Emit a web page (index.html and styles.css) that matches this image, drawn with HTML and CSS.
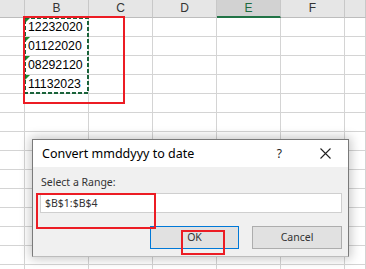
FILE: index.html
```html
<!DOCTYPE html>
<html>
<head>
<meta charset="utf-8">
<link rel="stylesheet" href="styles.css">
</head>
<body>
<div class="page">
  <div class="sheet">
    <div class="hc"></div><div class="hc">B</div><div class="hc">C</div><div class="hc">D</div><div class="hc sel">E</div><div class="hc">F</div><div class="hc"></div>

    <div class="c"></div><div class="c val"><span class="tri"></span>12232020</div><div class="c"></div><div class="c"></div><div class="c"></div><div class="c"></div><div class="c"></div>
    <div class="c"></div><div class="c val"><span class="tri"></span>01122020</div><div class="c"></div><div class="c"></div><div class="c"></div><div class="c"></div><div class="c"></div>
    <div class="c"></div><div class="c val"><span class="tri"></span>08292120</div><div class="c"></div><div class="c"></div><div class="c"></div><div class="c"></div><div class="c"></div>
    <div class="c"></div><div class="c val"><span class="tri"></span>11132023</div><div class="c"></div><div class="c"></div><div class="c"></div><div class="c"></div><div class="c"></div>
    <div class="c"></div><div class="c"></div><div class="c"></div><div class="c"></div><div class="c"></div><div class="c"></div><div class="c"></div>
    <div class="c"></div><div class="c"></div><div class="c"></div><div class="c"></div><div class="c"></div><div class="c"></div><div class="c"></div>
    <div class="c"></div><div class="c"></div><div class="c"></div><div class="c"></div><div class="c"></div><div class="c"></div><div class="c"></div>
    <div class="c"></div><div class="c"></div><div class="c"></div><div class="c"></div><div class="c"></div><div class="c"></div><div class="c"></div>
    <div class="c"></div><div class="c"></div><div class="c"></div><div class="c"></div><div class="c"></div><div class="c"></div><div class="c"></div>
    <div class="c"></div><div class="c"></div><div class="c"></div><div class="c"></div><div class="c"></div><div class="c"></div><div class="c"></div>
    <div class="c"></div><div class="c"></div><div class="c"></div><div class="c"></div><div class="c"></div><div class="c"></div><div class="c"></div>
    <div class="c"></div><div class="c"></div><div class="c"></div><div class="c"></div><div class="c"></div><div class="c"></div><div class="c"></div>
    <div class="c"></div><div class="c"></div><div class="c"></div><div class="c"></div><div class="c"></div><div class="c"></div><div class="c"></div>
    <div class="c"></div><div class="c"></div><div class="c"></div><div class="c"></div><div class="c"></div><div class="c"></div><div class="c"></div>
  </div>

  <svg class="marquee" width="66" height="78" viewBox="0 0 66 78">
    <rect x="1" y="1" width="63" height="75" fill="none" stroke="#1a633a" stroke-width="2" stroke-dasharray="4 2"/>
  </svg>
  <div class="mark mark-range"></div>

  <div class="dialog">
    <div class="titlebar">
      <span class="title">Convert mmddyyy to date</span>
      <span class="help">?</span>
      <svg class="close" width="11" height="11" viewBox="0 0 11 11"><path d="M0.5 0.5 L10.5 10.5 M10.5 0.5 L0.5 10.5" stroke="#222" stroke-width="1.1" fill="none"/></svg>
    </div>
    <div class="body">
      <label class="lbl">Select a Range:</label>
      <div class="input">$B$1:$B$4</div>
      <div class="buttons">
        <div class="btn ok">OK</div>
        <div class="btn">Cancel</div>
      </div>
    </div>
  </div>
  <div class="mark mark-input"></div>
  <div class="mark mark-ok"></div>
</div>
</body>
</html>
```

FILE: styles.css
```css
html, body {
  margin: 0;
  padding: 0;
  background: #ffffff;
}
.page {
  position: relative;
  width: 366px;
  height: 269px;
  overflow: hidden;
  background: #fff;
}
.sheet {
  display: grid;
  grid-template-columns: 25px repeat(5, 64px) 1fr;
  grid-template-rows: 18px repeat(14, 19px);
  font-family: "Liberation Sans", Arial, sans-serif;
}
.hc {
  box-sizing: border-box;
  background: #e6e6e6;
  border-right: 1px solid #c8c8c8;
  border-bottom: 1px solid #bdbdbd;
  font-size: 12px;
  line-height: 17px;
  text-align: center;
  color: #333;
}
.hc.sel {
  background: #d2d2d2;
  color: #1e6b3f;
  border-bottom: 2px solid #217346;
}
.c {
  box-sizing: border-box;
  border-right: 1px solid #d4d4d4;
  border-bottom: 1px solid #d4d4d4;
  position: relative;
}
.val {
  font-size: 12.3px;
  line-height: 18px;
  padding-left: 3px;
  color: #000;
}
.tri {
  position: absolute;
  left: 0;
  top: 0;
  width: 0;
  height: 0;
  border-top: 5px solid #1d8a2a;
  border-right: 5px solid transparent;
}
.marquee {
  position: absolute;
  left: 24px;
  top: 17px;
}
.mark {
  position: absolute;
  box-sizing: border-box;
  border: 2px solid #ec1c24;
}
.mark-range {
  left: 23px;
  top: 16px;
  width: 102px;
  height: 88px;
}
.dialog {
  position: absolute;
  left: 32px;
  top: 139px;
  width: 317px;
  height: 118px;
  box-sizing: border-box;
  border: 1px solid #7a7a7a;
  border-bottom-color: #bcbcbc;
  background: #f0f0f0;
  box-shadow: 0 0 10px 2px rgba(0,0,0,0.22);
  font-family: "Noto Sans", "Open Sans", sans-serif;
  display: flex;
  flex-direction: column;
}
.titlebar {
  height: 27px;
  background: #fff;
  display: flex;
  align-items: center;
  padding-left: 9px;
  padding-right: 17px;
}
.title {
  font-size: 12.5px;
  color: #000;
  flex: 1;
}
.help {
  font-size: 12px;
  color: #222;
  margin-right: 38px;
}
.close {
  display: block;
}
.body {
  padding: 8px 6px 0 7px;
  display: flex;
  flex-direction: column;
}
.lbl {
  font-size: 10.5px;
  color: #333;
  line-height: 15px;
  margin-left: 1px;
}
.input {
  margin-top: 3px;
  height: 20px;
  box-sizing: border-box;
  border: 1px solid #cfcfcf;
  background: #fff;
  font-size: 10.5px;
  line-height: 18px;
  padding-left: 4px;
  color: #333;
}
.buttons {
  display: flex;
  justify-content: flex-end;
  gap: 13px;
  margin-top: 13px;
}
.btn {
  width: 90px;
  height: 23px;
  box-sizing: border-box;
  border: 1px solid #adadad;
  background: #e1e1e1;
  font-size: 10.5px;
  line-height: 21px;
  text-align: center;
  color: #333;
}
.btn.ok {
  width: 89px;
  border: 1px solid #0078d7;
}
.mark-input {
  left: 36px;
  top: 193px;
  width: 120px;
  height: 36px;
}
.mark-ok {
  left: 181px;
  top: 230px;
  width: 44px;
  height: 25px;
}
```
